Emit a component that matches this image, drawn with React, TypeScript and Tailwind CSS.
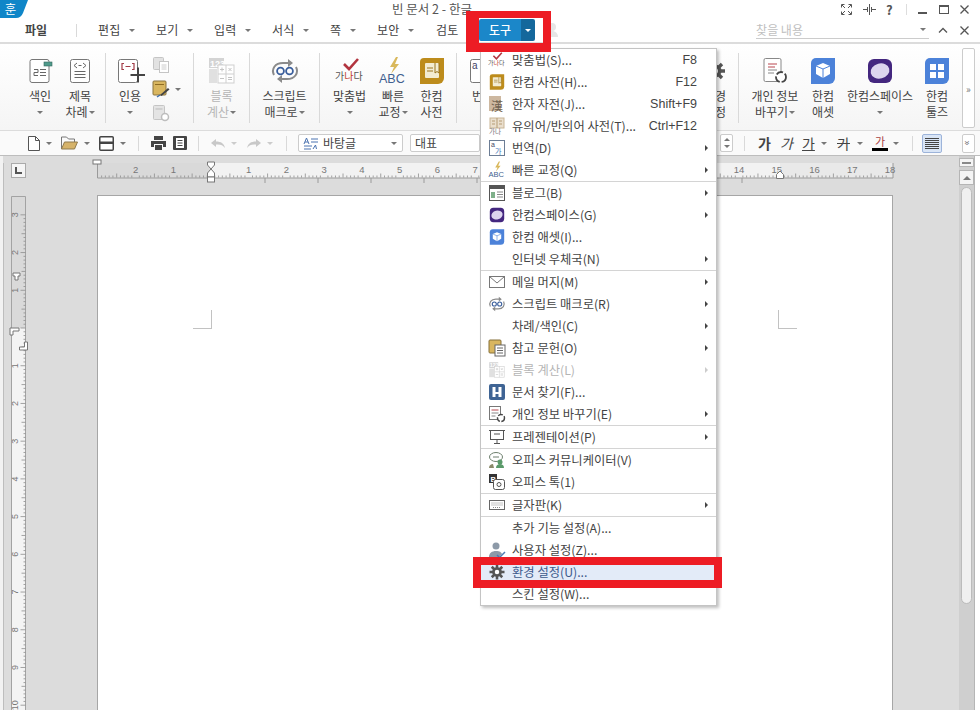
import type { ReactNode } from "react";

const KR = "font-['Noto_Sans_CJK_KR','Noto_Sans',sans-serif]";

function Caret({ className = "" }: { className?: string }) {
  return <span className={`inline-block h-0 w-0 border-x-[3px] border-t-[3px] border-x-transparent border-t-[#777] ${className}`} />;
}

function VSep({ className = "" }: { className?: string }) {
  return <span className={`block w-px shrink-0 bg-[#d9d9d9] ${className}`} />;
}

/* ---------- ribbon and menu icons ---------- */

function Svg({ size = 30, view = 30, children }: { size?: number; view?: number; children: ReactNode }) {
  return (
    <svg width={size} height={size} viewBox={`0 0 ${view} ${view}`} fill="none" className="shrink-0">
      {children}
    </svg>
  );
}

const IndexIcon = () => (
  <Svg>
    <rect x="5" y="3.500" width="19" height="23" rx="2" fill="#fff" stroke="#777" />
    <rect x="19" y="6" width="8" height="4" fill="#4f9a8b" stroke="#37695f" strokeWidth=".6" />
    <path d="M9 13.500h4v3H9v3h4M15 13.500h6M15 16.500h6M15 19.500h6" stroke="#666" />
  </Svg>
);

const TocIcon = () => (
  <Svg>
    <rect x="5.500" y="3.500" width="19" height="23" rx="2" fill="#fff" stroke="#777" />
    <path d="M12 7l-3 2.500L12 12M18 7l3 2.500L18 12M13.500 9.500h3M9.500 15.500h11M9.500 18.500h11M9.500 21.500h11" stroke="#666" />
  </Svg>
);

const QuoteIcon = () => (
  <Svg>
    <rect x="3.500" y="3.500" width="19" height="23" rx="2" fill="#fff" stroke="#777" />
    <path d="M9 7.500H7v6h2M17 7.500h2v6h-2M10.500 10.500h5" stroke="#a33c48" strokeWidth="1.200" />
    <path d="M23 11.500v15M15.500 19h15" stroke="#444" strokeWidth="2" />
  </Svg>
);

const SmallPagesIcon = () => (
  <Svg size={18} view={18}>
    <rect x="1.500" y="1.500" width="10" height="12" rx="1" fill="#e2e2e2" stroke="#c5c5c5" />
    <rect x="7.500" y="5.500" width="9" height="11" fill="#fff" stroke="#c5c5c5" />
    <path d="M9.500 9h5M9.500 11h5M9.500 13h5" stroke="#ccc" />
  </Svg>
);

const NotePenIcon = () => (
  <Svg size={18} view={18}>
    <rect x="1" y="1" width="13" height="14" rx="1" fill="#d9b65f" stroke="#8a7440" />
    <path d="M3 4.500h9" stroke="#8f6c22" />
    <path d="M8 15l8-7 1.500 1.500-8 6.500z" fill="#444" />
    <path d="M5 17l3-2" stroke="#3f6ea8" strokeWidth="1.500" />
  </Svg>
);

const SmallRefreshIcon = () => (
  <Svg size={18} view={18}>
    <rect x="1.500" y="1.500" width="11" height="14" rx="1" fill="#e4e4e4" stroke="#c5c5c5" />
    <path d="M3.500 5h7" stroke="#bbb" />
    <circle cx="13" cy="13" r="3.500" stroke="#bdbdbd" strokeWidth="1.500" fill="#fff" />
  </Svg>
);

const CalcIcon = ({ size = 30 }: { size?: number }) => (
  <Svg size={size}>
    <rect x="2" y="2" width="15" height="10" fill="#d4d4d4" />
    <text x="3" y="10.500" fontSize="9" fontWeight="700" fill="#fff" fontFamily="Liberation Sans">123</text>
    <rect x="11" y="9" width="16" height="18" fill="#fff" stroke="#cfcfcf" />
    <path d="M11 18h16M19 9v18" stroke="#cfcfcf" />
    <path d="M13 13.500h4M15 11.500v4M21.500 12l3 3M24.500 12l-3 3M13 22.500h4M21 21.500h4M21 23.500h4" stroke="#c4c4c4" />
    <rect x="2" y="13" width="8" height="14" fill="#e0e0e0" />
  </Svg>
);

const MacroIcon = ({ size = 30 }: { size?: number }) => (
  <Svg size={size}>
    <path d="M4 19C1 13 5 7 13 7h6M26 11c3 6-1 12-9 12h-6" stroke="#8b8b8b" strokeWidth="2" />
    <path d="M18 3l5 4-5 4zM12 19l-5 4 5 4z" fill="#8b8b8b" />
    <circle cx="10.500" cy="15" r="3.400" stroke="#3b5f9c" strokeWidth="1.800" />
    <circle cx="19.500" cy="15" r="3.400" stroke="#3b5f9c" strokeWidth="1.800" />
  </Svg>
);

const SpellIcon = ({ size = 30 }: { size?: number }) => (
  <Svg size={size}>
    <path d="M9 8l5 5 9-10" stroke="#b2343f" strokeWidth="2.600" />
    <text x="0" y="24" fontSize="10" fontFamily="Noto Sans CJK KR" fill="#555">
      가<tspan fill="#c0392b">나</tspan>다
    </text>
  </Svg>
);

const QuickFixIcon = ({ size = 30 }: { size?: number }) => (
  <Svg size={size}>
    <path d="M18 1l-6 10h4l-3 7 8-10h-4l3-7z" fill="#d9b85c" />
    <text x="1" y="27" fontSize="12.500" fontFamily="Liberation Sans" fill="#3f5f8f">ABC</text>
  </Svg>
);

const DictIcon = ({ size = 30 }: { size?: number }) => (
  <Svg size={size}>
    <path d="M3 6a4 4 0 0 1 4-4h20v20a6 6 0 0 1-6 6H3z" fill="#bd8c1c" />
    <rect x="8" y="7" width="14" height="15" rx="1" fill="#f3ecd2" />
    <path d="M10 12h6M10 15h6M18 7v10l2-1.500 2 1.500V7" stroke="#9a741e" />
  </Svg>
);

const GearIcon = ({ size = 30, color = "#555" }: { size?: number; color?: string }) => (
  <Svg size={size} view={24}>
    <circle cx="12" cy="12" r="6.500" fill={color} />
    <path d="M12 2v20M2 12h20M5 5l14 14M19 5L5 19" stroke={color} strokeWidth="3.400" />
    <circle cx="12" cy="12" r="3" fill="#fff" />
  </Svg>
);

const PrivacyIcon = () => (
  <Svg>
    <rect x="4" y="2.500" width="17" height="23" rx="1.500" fill="#fff" stroke="#888" />
    <path d="M8 8h9M8 11h7" stroke="#b9464f" />
    <path d="M8 14h9M8 17h6" stroke="#888" />
    <circle cx="21" cy="21" r="5" fill="#fff" stroke="#444" strokeWidth="1.800" strokeDasharray="7 2" />
  </Svg>
);

const AssetIcon = ({ size = 30 }: { size?: number }) => (
  <Svg size={size}>
    <path d="M3 7a5 5 0 0 1 5-5h19v20a6 6 0 0 1-6 6H3z" fill="#4c82d9" />
    <path d="M15 7l7 3v8l-7 4-7-4v-8z" fill="#fff" />
    <path d="M15 13v9M8 10l7 3 7-3" stroke="#4c82d9" />
  </Svg>
);

const SpaceIcon = ({ size = 30 }: { size?: number }) => (
  <Svg size={size}>
    <rect x="3" y="3" width="24" height="24" rx="6" fill="#44277f" />
    <ellipse cx="15" cy="15" rx="9.500" ry="7.500" fill="#ddd5ee" transform="rotate(-14 15 15)" />
  </Svg>
);

const ToolsIcon = () => (
  <Svg>
    <path d="M3 7a5 5 0 0 1 5-5h19v20a6 6 0 0 1-6 6H3z" fill="#4c82d9" />
    <path d="M8 8h6v6H8zM16 8h6v6h-6zM8 16h6v6H8zM16 16h6v6h-6z" fill="#fff" />
  </Svg>
);

const TranslateBigIcon = () => (
  <Svg>
    <rect x="2.500" y="3.500" width="24" height="23" rx="2" fill="#fff" stroke="#777" />
    <text x="4" y="13" fontSize="10" fontFamily="Liberation Sans" fill="#446">a</text>
  </Svg>
);

/* ---------- ribbon ---------- */

function RibbonBtn({ width, icon, lines, caret, muted }: { width: string; icon: ReactNode; lines: string[]; caret?: boolean; muted?: boolean }) {
  return (
    <div className={`flex shrink-0 flex-col items-center pt-[8px] ${width} ${muted ? "text-[#b5b5b5]" : "text-[#444]"}`}>
      <div className="flex h-[30px] items-center justify-center">{icon}</div>
      <div className="mt-[2px] flex flex-col items-center text-[12px] leading-[16px] whitespace-nowrap">
        {lines.map((line, i) => (
          <span key={line} className="flex items-center">
            {line}
            {caret && lines.length === 2 && i === 1 && <Caret className="ml-[1px]" />}
          </span>
        ))}
        {caret && lines.length === 1 && <Caret className="mt-[7px]" />}
      </div>
    </div>
  );
}

function RibbonSep() {
  return <VSep className="mt-[5px] h-[70px]" />;
}

function Ribbon() {
  return (
    <div className="flex h-[87px] items-start border-b border-[#dcdcdc] bg-gradient-to-b from-white to-[#f5f5f5] pt-[4px] pl-[20px]">
      <RibbonBtn width="w-[40px]" icon={<IndexIcon />} lines={["색인"]} caret />
      <RibbonBtn width="w-[40px]" icon={<TocIcon />} lines={["제목", "차례"]} caret />
      <div className="ml-[5px]"><RibbonSep /></div>
      <div className="w-[4px] shrink-0" />
      <RibbonBtn width="w-[40px]" icon={<QuoteIcon />} lines={["인용"]} caret />
      <div className="flex w-[43px] shrink-0 flex-col gap-[6px] pt-[8px] pl-[2px]">
        <SmallPagesIcon />
        <div className="flex items-center gap-[5px]">
          <NotePenIcon />
          <Caret />
        </div>
        <SmallRefreshIcon />
      </div>
      <RibbonSep />
      <RibbonBtn width="w-[55px]" icon={<CalcIcon />} lines={["블록", "계산"]} caret muted />
      <RibbonSep />
      <RibbonBtn width="w-[69px]" icon={<MacroIcon />} lines={["스크립트", "매크로"]} caret />
      <RibbonSep />
      <RibbonBtn width="w-[59px]" icon={<SpellIcon />} lines={["맞춤법"]} caret />
      <RibbonBtn width="w-[28px]" icon={<QuickFixIcon />} lines={["빠른", "교정"]} caret />
      <RibbonBtn width="w-[49px]" icon={<DictIcon />} lines={["한컴", "사전"]} />
      <RibbonSep />
      <div className="w-[14px] shrink-0" />
      <RibbonBtn width="w-[24px]" icon={<TranslateBigIcon />} lines={["번역"]} caret />
      <div className="w-[208px] shrink-0" />
      <RibbonBtn width="w-[24px]" icon={<GearIcon size={24} />} lines={["환경", "설정"]} />
      <div className="w-[11px] shrink-0" />
      <RibbonSep />
      <RibbonBtn width="w-[72px]" icon={<PrivacyIcon />} lines={["개인 정보", "바꾸기"]} caret />
      <RibbonBtn width="w-[24px]" icon={<AssetIcon />} lines={["한컴", "애셋"]} />
      <RibbonBtn width="w-[90px]" icon={<SpaceIcon />} lines={["한컴스페이스"]} caret />
      <RibbonBtn width="w-[24px]" icon={<ToolsIcon />} lines={["한컴", "툴즈"]} />
      <div className="ml-[13px] flex h-[80px] w-[13px] shrink-0 items-center justify-center rounded-[2px] border border-[#ccc] bg-white text-[10px] text-[#777]">»</div>
    </div>
  );
}

/* ---------- format toolbar ---------- */

function FormatBar() {
  return (
    <div className="flex h-[24px] items-center bg-[#fafafa] pl-[28px] text-[12px] text-[#444]">
      <svg width="12" height="15" viewBox="0 0 12 15" fill="none"><path d="M.5.500h7l4 4v10H.5z" fill="#fff" stroke="#555" /><path d="M7.500.500v4h4" stroke="#555" /></svg>
      <Caret className="mx-[6px]" />
      <svg width="17" height="14" viewBox="0 0 17 14" fill="none" className="ml-[3px]"><path d="M.5 13V1h5l2 2h6v3" stroke="#777" /><path d="M.5 13l3-7h13l-3 7z" fill="#d6b36a" stroke="#8f7a4c" /></svg>
      <Caret className="mx-[6px]" />
      <svg width="15" height="15" viewBox="0 0 15 15" fill="none" className="ml-[3px]"><rect x=".75" y=".75" width="13.500" height="13.500" rx="1" fill="#fff" stroke="#444" strokeWidth="1.500" /><path d="M0 5.500h15v2.500H0z" fill="#444" /></svg>
      <Caret className="mx-[6px]" />
      <VSep className="ml-[6px] mr-[12px] h-[15px]" />
      <svg width="15" height="14" viewBox="0 0 15 14"><path d="M3 0h9v4H3zM0 5h15v6h-3V8H3v3H0zM4 9h7v5H4z" fill="#444" /></svg>
      <svg width="14" height="14" viewBox="0 0 14 14" fill="none" className="ml-[7px]"><rect width="14" height="14" rx="1" fill="#444" /><rect x="3" y="2" width="8" height="10" fill="#fff" /><path d="M4.500 4.500h5M4.500 7h5M4.500 9.500h5" stroke="#444" /></svg>
      <VSep className="ml-[11px] mr-[12px] h-[15px]" />
      <svg width="14" height="9" viewBox="0 0 14 9"><path d="M0 4l5-4v2.500c5 0 8 2 9 6.500-2-3-5-4-9-3.500V8z" fill="#c8c8c8" /></svg>
      <Caret className="mx-[6px] border-t-[#ccc]" />
      <svg width="14" height="9" viewBox="0 0 14 9" className="ml-[4px]"><path d="M14 4L9 0v2.500C4 2.500 1 4.500 0 9c2-3 5-4 9-3.500V8z" fill="#c8c8c8" /></svg>
      <Caret className="mx-[6px] border-t-[#ccc]" />
      <VSep className="ml-[7px] mr-[11px] h-[15px]" />
      <div className="flex h-[18px] w-[105px] items-center rounded-[2px] border border-[#ccc] bg-white pl-[4px]">
        <svg width="16" height="13" viewBox="0 0 16 13" fill="none"><path d="M1 7l2.500-6L6 7M2 5h3M8 2h7M8 5h7M1 9h8M1 12h7" stroke="#4a72b0" /><path d="M10 12l2.500-4 1 4" stroke="#4a72b0" /></svg>
        <span className="ml-[4px] flex-1 leading-none">바탕글</span>
        <Caret className="mr-[5px]" />
      </div>
      <div className="ml-[7px] flex h-[18px] w-[70px] items-center rounded-[2px] border border-[#ccc] bg-white pl-[4px] leading-none">대표</div>
      <div className="w-[240px] shrink-0" />
      <div className="flex h-[18px] w-[13px] flex-col items-center justify-center gap-[4px] rounded-[2px] border border-[#ccc] bg-white">
        <span className="h-0 w-0 border-x-[3px] border-b-[3px] border-x-transparent border-b-[#777]" />
        <Caret />
      </div>
      <VSep className="mx-[11px] h-[15px]" />
      <div className="flex items-center text-[14px] leading-none">
        <span className="ml-[2px] w-[22px] font-bold">가</span>
        <span className="w-[22px] italic">가</span>
        <span className="w-[14px] underline">가</span>
        <Caret className="mx-[5px]" />
        <span className="ml-[5px] w-[14px] line-through">가</span>
        <Caret className="mx-[6px]" />
        <span className="ml-[3px] flex w-[16px] flex-col items-center text-[11px] text-[#a44]">가<span className="mt-[1px] block h-[3px] w-[16px] bg-black" /></span>
        <Caret className="mx-[5px]" />
      </div>
      <VSep className="ml-[8px] mr-[9px] h-[15px]" />
      <div className="flex h-[19px] w-[20px] flex-col justify-center gap-[1px] rounded-[2px] border border-[#9db4da] bg-[#d9e5f6] px-[2px]">
        {[0, 1, 2, 3, 4, 5].map((n) => (
          <span key={n} className="block h-px bg-[#444]" />
        ))}
      </div>
      <div className="ml-[20px] flex h-[19px] w-[13px] items-center justify-center rounded-[2px] border border-[#ccc] bg-white text-[10px] leading-none text-[#666]">
        <span className="rotate-90">»</span>
      </div>
    </div>
  );
}

/* ---------- rulers ---------- */

const CM = 37.72;

function HRuler() {
  const originX = 114;
  const ticks: ReactNode[] = [];
  for (let i = -30; i <= 180; i++) {
    const x = originX + (i * CM) / 10;
    if (x < 0 || x > 796) continue;
    const h = i % 10 === 0 ? 0 : i % 5 === 0 ? 4 : 2;
    ticks.push(<path key={i} d={`M${x} 14.500v-${h}`} stroke="#8d8d8d" strokeWidth=".8" />);
  }
  const labels: ReactNode[] = [];
  for (let n = -2; n <= 18; n++) {
    if (n === 0) continue;
    labels.push(
      <text key={n} x={originX + n * CM} y="10" textAnchor="middle" fontSize="9.500" fill="#777" fontFamily="Liberation Sans">
        {Math.abs(n)}
      </text>,
    );
  }
  const tabs = Array.from({ length: 10 }, (_, k) => 168 + 53 * k);
  return (
    <svg width="796" height="21" viewBox="0 0 796 21" fill="none" className="block overflow-visible">
      <rect x="0" width="796" height="15" fill="#f2f2f2" />
      <rect x="0" width="114" height="15" fill="#d9d9d9" />
      <rect x="683" width="113" height="15" fill="#e9e9e9" />
      <path d="M.5 0v15H796V0" stroke="#9a9a9a" />
      {ticks}
      {labels}
      {tabs.map((x) => (
        <path key={x} d={`M${x} 15v5`} stroke="#9a9a9a" />
      ))}
      {/* indent markers */}
      <rect x="-4" y="-3" width="8" height="4" fill="#fff" stroke="#777" />
      <path d="M110.500-1h7v3l-3.500 4-3.500-4z" fill="#fff" stroke="#777" />
      <path d="M114 6l3.500 4v4h-7v-4z" fill="#fff" stroke="#777" />
      <rect x="110.500" y="14" width="7" height="5" fill="#fff" stroke="#777" />
      <path d="M683 8l3.500 3.500v4h-7v-4z" fill="#fff" stroke="#777" />
    </svg>
  );
}

function VRuler() {
  const originY = 132;
  const ticks: ReactNode[] = [];
  const labels: ReactNode[] = [];
  for (let i = -30; i <= 100; i++) {
    const y = originY + (i * CM) / 10;
    if (y < 0) continue;
    const w = i % 10 === 0 ? 5 : i % 5 === 0 ? 4 : 2;
    ticks.push(<path key={i} d={`M14.500 ${y}h-${w}`} stroke="#8d8d8d" strokeWidth=".8" />);
  }
  for (let n = -3; n <= 10; n++) {
    if (n === 0) continue;
    const y = originY + n * CM;
    labels.push(
      <text key={n} transform={`translate(7 ${y}) rotate(-90)`} textAnchor="middle" fontSize="9" fill="#777" fontFamily="Liberation Sans">
        {Math.abs(n)}
      </text>,
    );
  }
  return (
    <svg width="15" height="514" viewBox="0 0 15 514" fill="none" className="block overflow-visible">
      <rect width="15" height="514" fill="#f4f4f4" />
      <rect width="15" height="132" fill="#d9d9d9" />
      <path d="M.5 514V.5h14V514" stroke="#a3a3a3" />
      {ticks}
      {labels}
      {/* margin markers */}
      <path d="M2 77h7v3H7v4H4v-4H2z" fill="#fff" stroke="#777" />
      <path d="M-1 132h9v3H2v4h-3z" fill="#fff" stroke="#777" />
      <path d="M16.500 146v8h-8v-3h5v-5z" fill="#fff" stroke="#777" />
    </svg>
  );
}

/* ---------- tools drop-down ---------- */

const Tiny = ({ children }: { children: ReactNode }) => <div className="flex h-[18px] w-[18px] items-center justify-center">{children}</div>;

const HanjaIcon = () => (
  <Svg size={18} view={18}>
    <rect x="1" y="1" width="12" height="15" fill="#cdb8a0" />
    <text x="3" y="16" fontSize="12" fontFamily="Noto Sans CJK KR" fill="#6d6150">漢</text>
  </Svg>
);
const ThesaurusIcon = () => (
  <Svg size={18} view={18}>
    <rect x="2" y="1" width="14" height="10" fill="#eadfce" stroke="#c9b596" />
    <path d="M9 1v10M4 4h3M4 7h3M11 4h3M11 7h3" stroke="#b59b75" />
    <text x="1" y="17" fontSize="6.500" fontFamily="Noto Sans CJK KR" fill="#777">가나</text>
  </Svg>
);
const TranslateIcon = () => (
  <Svg size={18} view={18}>
    <rect x="1.500" y="1.500" width="15" height="15" fill="#fff" stroke="#6c7d95" />
    <text x="3" y="8" fontSize="7" fontFamily="Liberation Sans" fill="#446">a</text>
    <text x="7" y="15" fontSize="7" fontFamily="Noto Sans CJK KR" fill="#3c74b8">가</text>
  </Svg>
);
const BlogIcon = () => (
  <Svg size={18} view={18}>
    <rect x="1.500" y="1.500" width="15" height="15" fill="#fff" stroke="#555" />
    <path d="M1.500 2h15v3h-15z" fill="#555" />
    <path d="M9 8h6M9 10.500h6M9 13h6" stroke="#888" />
    <rect x="3" y="8" width="4" height="6" fill="#7fb08a" />
  </Svg>
);
const MailIcon = () => (
  <Svg size={18} view={18}>
    <rect x="1.500" y="3.500" width="15" height="11" fill="#fff" stroke="#777" />
    <path d="M1.500 3.500L9 10l7.500-6.500" stroke="#777" />
  </Svg>
);
const RefDocIcon = () => (
  <Svg size={18} view={18}>
    <rect x="1" y="1" width="12" height="13" rx="1" fill="#d9b65f" stroke="#86703a" />
    <rect x="7" y="6" width="10" height="11" fill="#fff" stroke="#666" />
    <path d="M9 9h6M9 11.500h6M9 14h6" stroke="#666" />
  </Svg>
);
const BinocularIcon = () => (
  <Svg size={18} view={18}>
    <rect x="1" y="1" width="16" height="16" rx="2" fill="#3f6494" />
    <path d="M4.500 4h3v5h3V4h3v10h-3v-3h-3v3h-3z" fill="#fff" />
  </Svg>
);
const PrivacySmallIcon = () => (
  <Svg size={18} view={18}>
    <rect x="1.500" y="1.500" width="11" height="13" fill="#fff" stroke="#777" />
    <path d="M3.500 5h7" stroke="#b9464f" />
    <path d="M3.500 8h7M3.500 11h4" stroke="#888" />
    <circle cx="13" cy="13" r="3.500" fill="#fff" stroke="#444" strokeWidth="1.400" strokeDasharray="5 1.500" />
  </Svg>
);
const ScreenIcon = () => (
  <Svg size={18} view={18}>
    <rect x="2.500" y="2.500" width="13" height="9" fill="#fff" stroke="#555" />
    <path d="M1 2.500h16M9 11.500v4M6 15.500h6M6 6h6" stroke="#555" />
  </Svg>
);
const CommunicatorIcon = () => (
  <Svg size={18} view={18}>
    <ellipse cx="8" cy="6" rx="6.500" ry="4.500" fill="#fff" stroke="#6d7f6d" />
    <path d="M5 6h6" stroke="#6d7f6d" />
    <circle cx="12" cy="11" r="2.500" fill="#5a9a6a" />
    <path d="M8 17c0-3 2-4 4-4s4 1 4 4z" fill="#5a9a6a" />
    <path d="M1 17c0-3 2-4 4-4l1 4z" fill="#8a8a6a" />
  </Svg>
);
const TalkIcon = () => (
  <Svg size={18} view={18}>
    <rect x="1" y="1" width="8" height="9" fill="#333" />
    <text x="2.500" y="8.500" fontSize="7.500" fontWeight="700" fontFamily="Liberation Sans" fill="#fff">B</text>
    <rect x="5.500" y="6.500" width="11" height="10" rx="2" fill="#fff" stroke="#555" />
    <circle cx="11" cy="11.500" r="2" stroke="#555" />
  </Svg>
);
const KeyboardIcon = () => (
  <Svg size={18} view={18}>
    <rect x="1.500" y="4.500" width="15" height="9" fill="#fff" stroke="#666" />
    <path d="M3.500 7h11M3.500 9h11M5 11.500h8" stroke="#888" strokeDasharray="1 1" />
  </Svg>
);
const UserIcon = () => (
  <Svg size={18} view={18}>
    <circle cx="8" cy="5" r="3.500" fill="#8d9aa8" />
    <path d="M1 16c0-4 3-6 7-6s5 1 6 3l-3 3z" fill="#8d9aa8" />
    <path d="M9 14l2.500 2.500L17 11" stroke="#4d7ab3" strokeWidth="1.500" />
  </Svg>
);

type MenuRow = { label: string; icon?: ReactNode; shortcut?: string; more?: boolean; muted?: boolean; active?: boolean };

const menuGroups: MenuRow[][] = [
  [
    { label: "맞춤법(S)...", icon: <SpellIcon size={18} />, shortcut: "F8" },
    { label: "한컴 사전(H)...", icon: <DictIcon size={18} />, shortcut: "F12" },
    { label: "한자 자전(J)...", icon: <HanjaIcon />, shortcut: "Shift+F9" },
    { label: "유의어/반의어 사전(T)...", icon: <ThesaurusIcon />, shortcut: "Ctrl+F12" },
    { label: "번역(D)", icon: <TranslateIcon />, more: true },
    { label: "빠른 교정(Q)", icon: <QuickFixIcon size={18} />, more: true },
  ],
  [
    { label: "블로그(B)", icon: <BlogIcon />, more: true },
    { label: "한컴스페이스(G)", icon: <SpaceIcon size={18} />, more: true },
    { label: "한컴 애셋(I)...", icon: <AssetIcon size={18} /> },
    { label: "인터넷 우체국(N)", more: true },
  ],
  [
    { label: "메일 머지(M)", icon: <MailIcon />, more: true },
    { label: "스크립트 매크로(R)", icon: <MacroIcon size={18} />, more: true },
    { label: "차례/색인(C)", more: true },
    { label: "참고 문헌(O)", icon: <RefDocIcon />, more: true },
    { label: "블록 계산(L)", icon: <CalcIcon size={18} />, more: true, muted: true },
    { label: "문서 찾기(F)...", icon: <BinocularIcon /> },
    { label: "개인 정보 바꾸기(E)", icon: <PrivacySmallIcon />, more: true },
  ],
  [{ label: "프레젠테이션(P)", icon: <ScreenIcon />, more: true }],
  [
    { label: "오피스 커뮤니케이터(V)", icon: <CommunicatorIcon /> },
    { label: "오피스 톡(1)", icon: <TalkIcon /> },
  ],
  [{ label: "글자판(K)", icon: <KeyboardIcon />, more: true }],
  [
    { label: "추가 기능 설정(A)..." },
    { label: "사용자 설정(Z)...", icon: <UserIcon /> },
    { label: "환경 설정(U)...", icon: <GearIcon size={18} />, active: true },
    { label: "스킨 설정(W)..." },
  ],
];

function ToolsMenu() {
  return (
    <div className="absolute top-[48px] left-[480px] w-[237px] border border-[#c4c4c4] bg-white shadow-[2px_2px_3px_rgba(0,0,0,0.25)]">
      {menuGroups.map((group, g) => (
        <div key={g} className={g > 0 ? "border-t border-[#d4d4d4]" : ""}>
          {group.map((row) => (
            <div
              key={row.label}
              className={`flex h-[22px] items-center pl-[7px] text-[12.300px] leading-none ${row.active ? "bg-[#e3ebf8] text-[#3d5a8c]" : row.muted ? "text-[#b5b5b5]" : "text-[#444]"}`}
            >
              <Tiny>{row.icon}</Tiny>
              <span className="ml-[6px] flex-1 whitespace-nowrap">{row.label}</span>
              {row.shortcut && <span className="mr-[19px] text-[12.500px] text-[#444] font-['Liberation_Sans']">{row.shortcut}</span>}
              {row.more && <span className={`mr-[8px] h-0 w-0 border-y-[3px] border-l-[3px] border-y-transparent ${row.muted ? "border-l-[#ccc]" : "border-l-[#444]"}`} />}
            </div>
          ))}
        </div>
      ))}
    </div>
  );
}

/* ---------- title + tab bar ---------- */

function TitleBar() {
  return (
    <div className="relative flex h-[18px] items-center bg-white text-[12.500px] text-[#555]">
      <svg width="28" height="18" viewBox="0 0 28 18" className="shrink-0">
        <path d="M0 0h28l-5 13q-2 5-7 5H0z" fill="#0f86c8" />
        <text x="10.500" y="13.500" textAnchor="middle" fontSize="12.500" fill="#fff" fontFamily="Noto Sans CJK KR">훈</text>
      </svg>
      <span className="ml-[364px] leading-none">빈 문서 2 - 한글</span>
      <div className="ml-auto flex items-center pr-[11px] text-[#555]">
        <svg width="11" height="11" viewBox="0 0 11 11" fill="none" stroke="#555"><path d="M.5 3.500v-3h3M10.500 3.500v-3h-3M.5 7.500v3h3M10.500 7.500v3h-3M1 1l3 3M10 1L7 4M1 10l3-3M10 10L7 7" /></svg>
        <svg width="13" height="11" viewBox="0 0 13 11" fill="none" stroke="#555" className="ml-[11px]"><path d="M6.500 0v11M4.500 3v5M8.500 3v5M0 5.500h4M13 5.500H9" /></svg>
        <span className="ml-[10px] w-[9px] text-[13px] leading-none font-bold">?</span>
        <span className="mx-[11px] block h-[11px] w-px bg-[#ddd]" />
        <span className="block h-[2px] w-[9px] translate-y-[4px] bg-[#555]" />
        <span className="ml-[12px] block h-[9px] w-[10px] border border-t-2 border-[#555]" />
        <svg width="9" height="9" viewBox="0 0 9 9" stroke="#555" strokeWidth="1.300" className="ml-[11px]"><path d="M.5.500l8 8M8.500.500l-8 8" /></svg>
      </div>
    </div>
  );
}

function TabItem({ label, width }: { label: string; width: string }) {
  return (
    <div className={`flex shrink-0 items-center ${width}`}>
      <span>{label}</span>
      <Caret className="ml-[9px]" />
    </div>
  );
}

function TabBar() {
  return (
    <div className="flex h-[26px] items-center border-b-2 border-[#dcdcdc] bg-white text-[12px] leading-none text-[#444]">
      <span className="ml-[25px] font-bold">파일</span>
      <VSep className="ml-[29px] h-[13px]" />
      <div className="ml-[21px] flex">
        <TabItem label="편집" width="w-[58px]" />
        <TabItem label="보기" width="w-[58px]" />
        <TabItem label="입력" width="w-[58px]" />
        <TabItem label="서식" width="w-[58px]" />
        <TabItem label="쪽" width="w-[47px]" />
        <TabItem label="보안" width="w-[59px]" />
      </div>
      <span className="w-[43px] shrink-0">검토</span>
      <div className="flex h-[22px] w-[56px] shrink-0 overflow-hidden rounded-[2px] font-medium text-white">
        <span className="flex flex-1 items-center justify-center bg-[#1b87c9]">도구</span>
        <span className="flex w-[14px] items-center justify-center bg-[#14689c]">
          <Caret className="border-t-white" />
        </span>
      </div>
      {/* greyed account glyph next to the tabs */}
      <svg width="18" height="18" viewBox="0 0 18 18" className="ml-[8px] shrink-0">
        <circle cx="9" cy="6" r="4" fill="#e6e6e6" />
        <path d="M3 16c0-4 3-6 6-6s6 2 6 6z" fill="#e6e6e6" />
      </svg>
      <div className="ml-[195px] flex h-[17px] w-[173px] shrink-0 items-center justify-between border-b border-[#ccc] text-[#c0c0c0]">
        <span>찾을 내용</span>
        <Caret className="mr-[3px]" />
      </div>
      <svg width="10" height="6" viewBox="0 0 10 6" fill="none" stroke="#555" strokeWidth="1.300" className="ml-[9px]"><path d="M1 5.500l4-4 4 4" /></svg>
      <svg width="9" height="9" viewBox="0 0 9 9" stroke="#555" strokeWidth="1.300" className="ml-[12px]"><path d="M.5.500l8 8M8.500.500l-8 8" /></svg>
    </div>
  );
}

/* ---------- document area ---------- */

function CropMark({ side }: { side: "left" | "right" }) {
  return <div className={`h-[19px] w-[19px] border-b border-[#c2c2c2] ${side === "left" ? "border-r" : "border-l"}`} />;
}

function Workspace() {
  return (
    <div className="flex min-h-0 flex-1 border-t border-[#bdbdbd] bg-[#dcdcdc]">
      <div className="w-[97px] shrink-0 border-l-[3px] border-[#f2f2f2] pt-[7px]">
        <div className="h-full border-l border-[#bdbdbd] pl-[7px]">
          <div className="flex h-[15px] w-[15px] items-end justify-start border border-[#aaa] bg-[#f5f5f5] p-[3px]">
            <span className="block h-[7px] w-[7px] border-b-2 border-l-2 border-[#555]" />
          </div>
          <div className="mt-[18px]">
            <VRuler />
          </div>
        </div>
      </div>
      <div className="w-[796px] shrink-0 pt-[7px]">
        <HRuler />
        <div className="mt-[11px] h-[520px] border border-b-0 border-[#a6a6a6] bg-white">
          <div className="flex justify-between pt-[114px] pr-[95px] pl-[95px]">
            <CropMark side="left" />
            <CropMark side="right" />
          </div>
        </div>
      </div>
      <div className="ml-[66px] flex w-[16px] shrink-0 flex-col items-center border-r border-[#b5b5b5] bg-[#cfcfcf] pt-[2px]">
        <div className="flex h-[9px] w-[15px] items-center justify-center border border-[#b5b5b5] bg-[#f4f4f4]">
          <span className="block h-[2px] w-[9px] bg-[#888]" />
        </div>
        <div className="mt-[3px] flex h-[15px] w-[15px] items-center justify-center border border-[#b5b5b5] bg-[#f4f4f4]">
          <span className="h-0 w-0 border-x-[4px] border-b-[4px] border-x-transparent border-b-[#777]" />
        </div>
        <div className="mt-[2px] h-[417px] w-[11px] rounded-full border border-[#bbb] bg-[#f0f0f0]" />
      </div>
      <div className="w-[5px] shrink-0 bg-white" />
    </div>
  );
}

export default function App() {
  return (
    <div className={`relative flex h-[710px] w-[980px] flex-col overflow-hidden bg-white ${KR}`}>
      <TitleBar />
      <TabBar />
      <Ribbon />
      <FormatBar />
      <Workspace />
      <ToolsMenu />
      {/* callouts around the tab and the menu entry */}
      <div className="pointer-events-none absolute top-[11px] left-[466px] h-[41px] w-[85px] border-t-[7px] border-r-[8px] border-b-[9px] border-l-[13px] border-[#ed1c24]" />
      <div className="pointer-events-none absolute top-[557px] left-[473px] h-[31px] w-[249px] border-[8px] border-[#ed1c24]" />
    </div>
  );
}
